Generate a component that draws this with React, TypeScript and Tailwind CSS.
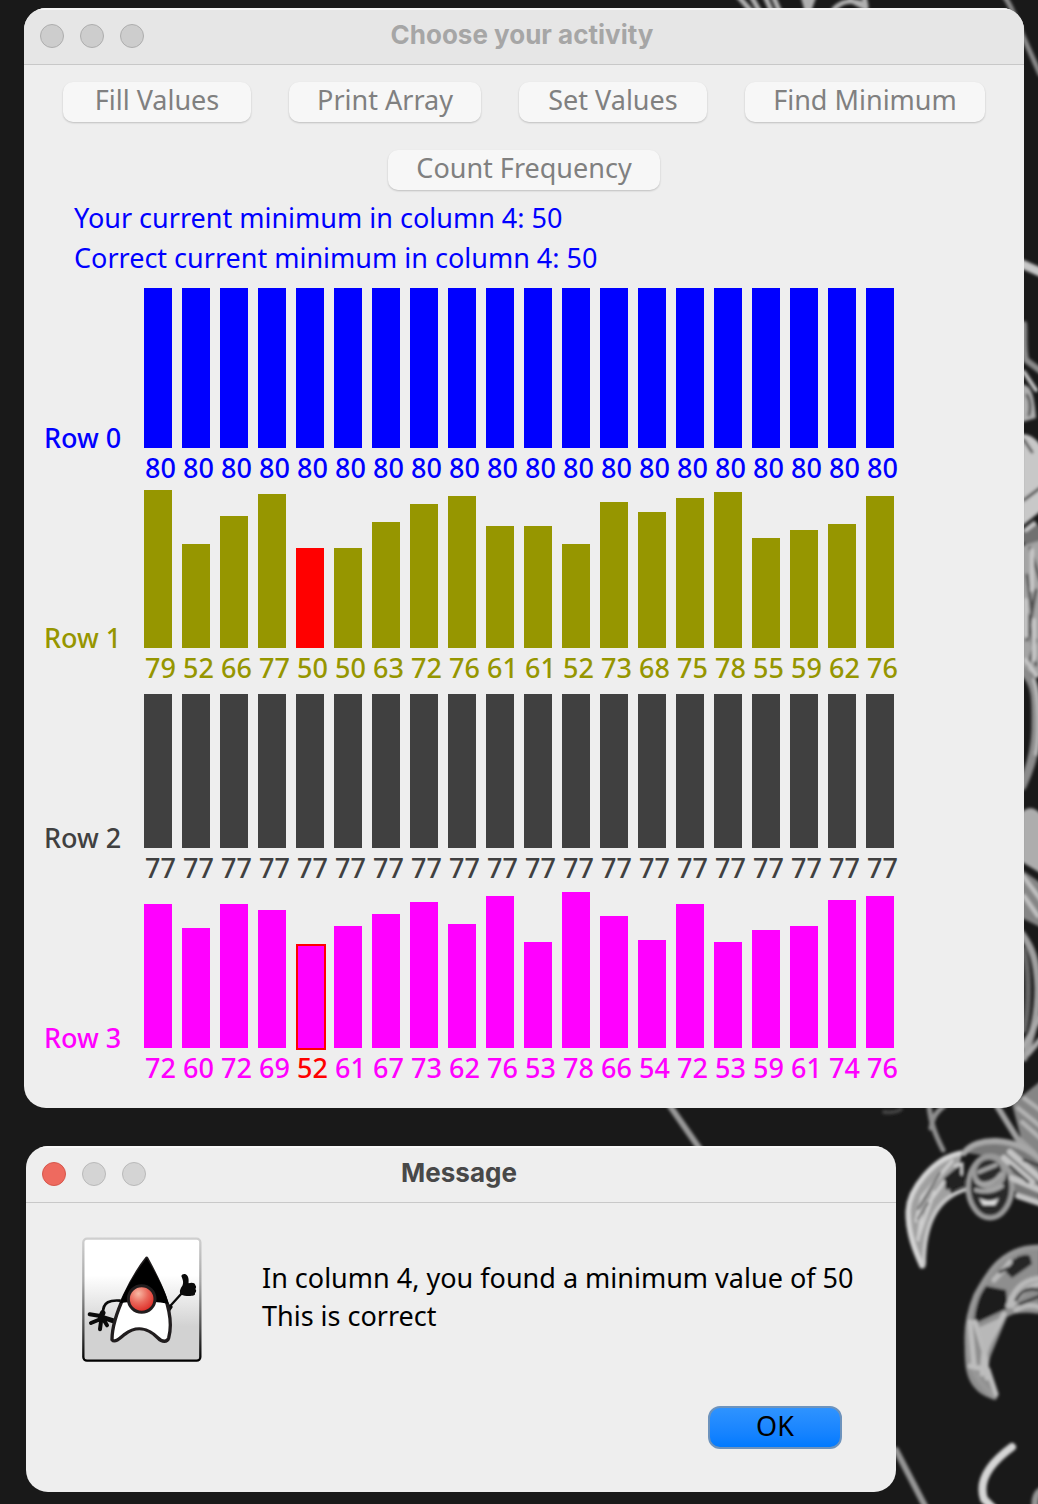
import React from "react";

type BarRow = {
  label: string;
  text: string;
  fill: string;
  values: number[];
  filled?: number;
  outlined?: number;
};

const rows: BarRow[] = [
  { label: "Row 0", text: "text-[#0000ff]", fill: "bg-[#0000ff]", values: Array(20).fill(80) },
  {
    label: "Row 1",
    text: "text-[#969600]",
    fill: "bg-[#969600]",
    values: [79, 52, 66, 77, 50, 50, 63, 72, 76, 61, 61, 52, 73, 68, 75, 78, 55, 59, 62, 76],
    filled: 4,
  },
  { label: "Row 2", text: "text-[#404040]", fill: "bg-[#404040]", values: Array(20).fill(77) },
  {
    label: "Row 3",
    text: "text-[#ff00ff]",
    fill: "bg-[#ff00ff]",
    values: [72, 60, 72, 69, 52, 61, 67, 73, 62, 76, 53, 78, 66, 54, 72, 53, 59, 61, 74, 76],
    outlined: 4,
  },
];

const actions = [
  { name: "Fill Values", width: "w-[188px]" },
  { name: "Print Array", width: "w-[192px]" },
  { name: "Set Values", width: "w-[188px]" },
  { name: "Find Minimum", width: "w-[240px]" },
  { name: "Count Frequency", width: "w-[272px]" },
];

function Wallpaper() {
  return (
    <svg
      className="absolute inset-0 h-full w-full"
      viewBox="0 0 1038 1504"
      preserveAspectRatio="xMaxYMin slice"
      fill="none"
      strokeLinecap="round"
      aria-hidden="true"
    >
      <defs>
        <filter id="soft" x="-5%" y="-5%" width="110%" height="110%">
          <feGaussianBlur stdDeviation="1.5" />
        </filter>
      </defs>
      <g filter="url(#soft)">
        {/* strokes above the first window */}
        <g stroke="#b0b0b0" strokeWidth="5">
          <path d="M738-4l14 16M751-4l9 16M764-6l8 18M773-4l6 14" />
          <path d="M808-4v14M803-4l4 14M814-4l-5 14" />
          <path d="M834 9c8-8 17-10 30-5M850 0l16 8M864-4l2 10" />
          <path d="M1004-4c8 10 12 24 18 38l18 40" stroke="#8a8a8a" />
        </g>
        {/* right edge */}
        <path d="M1022 264l20 9" stroke="#c8c8c8" strokeWidth="9" />
        <path d="M1024 324c1 12-1 22 2 36l16 12" stroke="#8c8c8c" strokeWidth="6" />
        <path d="M1022 384c10 2 12 12 14 34l-14 4z" fill="#b0b0b0" />
        <path d="M1022 434c8 0 16 6 20 14v62l-20 16z" fill="#c8c8c8" />
        <path d="M1022 530l12-10 8 10v26l-20-14z" fill="#707070" />
        <path d="M1022 546l20-6v138l-20-10z" fill="#a4a4a4" />
        <g stroke="#505050" strokeWidth="3">
          <path d="M1027 395q5 8 2 20M1024 440l8 12M1024 500l16-12M1030 548l10 32M1027 575l5 38M1036 590l-9 50M1028 615l8 50M1036 640l-8 26" />
        </g>
        <g stroke="#c9c9c9" strokeWidth="4">
          <path d="M1024 372l12 18M1026 530l8-6M1032 550v40M1026 600v36M1034 620v40M1026 660l10 16" />
        </g>
        <path d="M1024 672c14 12 12 32 12 58-1 24-6 38-14 56" stroke="#8b8b8b" strokeWidth="9" />
        <path d="M1034 680c6 20 5 60 2 74" stroke="#bbb" strokeWidth="4" />
        <path d="M1022 812c6-6 14-5 20 4v58l-20-12z" fill="#adadad" />
        <path d="M1022 870l20 14v44l-20-10z" fill="#858585" />
        <path d="M1023 876l18 24M1024 896l14 20" stroke="#c4c4c4" strokeWidth="4" />
        <path d="M1022 934c10 14 15 26 16 54 0 28-5 44-14 70" stroke="#a0a0a0" strokeWidth="7" />
        <path d="M1023 950c6 14 7 55 1 80" stroke="#666" strokeWidth="6" />
        <path d="M1040 1018l-17 28M1040 1040l-12 14" stroke="#aaa" strokeWidth="5" />
        <path d="M1012 1104l30-24v76l-20-14z" fill="#858585" />
        <g stroke="#b6b6b6" strokeWidth="4">
          <path d="M1018 1108l22 18M1024 1098l16 12M1022 1122l18 16" />
        </g>
        {/* gap between the windows */}
        <path d="M670 1106l32 46" stroke="#989898" strokeWidth="6" />
        <path d="M929 1106c2 18 6 28 14 44M944 1106c-10 8-12 14-13 22" stroke="#8e8e8e" strokeWidth="5" />
        <path d="M884 1112c8 1 13 0 17-3" stroke="#444" strokeWidth="4" />
        <path d="M997 1106l20 32 24 22" stroke="#a0a0a0" strokeWidth="6" />
        {/* upper claw */}
        <path
          d="M962 1153c-16-2-34 12-44 30-12 18-14 28-11 46 2 14 8 28 13 39h5c2-8-1-20 1-34 4-19 18-32 26-39l-4-12 10-10 4-20z"
          fill="#a0a0a0"
        />
        <path d="M944 1178l18-15 2 23-18 4z" fill="#202020" />
        <path d="M961 1153c-28 5-52 36-53 58 0 24 8 42 14 55" stroke="#d6d6d6" strokeWidth="5" />
        <path d="M924 1264c0-36 10-66 43-75" stroke="#c8c8c8" strokeWidth="4" />
        <path d="M952 1161l-30 36-6 24M944 1182l-22 30-4 28M934 1192l-16 46M955 1166l7-2v10" stroke="#cfcfcf" strokeWidth="3" />
        <path d="M940 1173l-22 36M928 1203l-10 16" stroke="#5a5a5a" strokeWidth="2" />
        {/* knuckle */}
        <path d="M962 1152c14-14 40-20 78 2v48c-16 0-24-6-30-18-5-16-12-26-24-28z" fill="#787878" />
        <path d="M964 1153c12-17 50-17 76 6" stroke="#a8a8a8" strokeWidth="6" />
        <ellipse cx="990" cy="1187" rx="22" ry="31" fill="#2c2c2c" stroke="#9b9b9b" strokeWidth="5" />
        <ellipse cx="989" cy="1172" rx="15" ry="15" stroke="#999" strokeWidth="5" />
        <path d="M977 1182q14 6 24-8M979 1172l17-7M976 1190q14 4 26-4" stroke="#a6a6a6" strokeWidth="4" />
        <path d="M979 1198q10 6 20 0l-4 7-12 0z" fill="#e0e0e0" />
        <path d="M1004 1158l28 24M1010 1152l30 26M1012 1178l28 12M1018 1196l24 8" stroke="#c4c4c4" strokeWidth="6" />
        <path d="M1010 1166l18 16M1024 1160l16 6" stroke="#404040" strokeWidth="3" />
        {/* lower claw */}
        <path
          d="M1040 1247c-38 2-54 26-66 50-9 22-11 52-8 72 4 20 16 27 29 31 4-2 3-7 0-11-7-8-8-22-4-34l16-38c8-5 18-5 33-3z"
          fill="#8e8e8e"
        />
        <path d="M986 1286l20 4 2 18-34 16c1-14 4-28 12-38z" fill="#1c1c1c" />
        <path d="M1010 1262q14-10 20-6l2 8-20 14-6-6z" fill="#262626" />
        <path d="M1040 1247c-38 0-52 26-64 48-14 34-14 76 18 101" stroke="#989898" strokeWidth="5" />
        <path d="M975 1322l10 32 2 24M1004 1314l-20 38-2 22M970 1322l4 42M970 1366l18 4 8 24" stroke="#bdbdbd" strokeWidth="5" />
        <path d="M978 1328l22-10-14 40z" fill="#b8b8b8" />
        <path d="M1008 1306c8-22 20-27 34-28M1012 1306c6-12 16-20 28-22M1016 1310q12-8 26-2M994 1280q8-8 16-18" stroke="#bababa" strokeWidth="5" />
        <path d="M1016 1300q7-14 22-10M1020 1304l20-8M1000 1272l8-4" stroke="#3a3a3a" strokeWidth="3" />
        {/* lower strokes */}
        <path d="M1012 1447c-22 16-34 34-28 52l10 10" stroke="#d6d6d6" strokeWidth="8" />
        <path d="M896 1450l30 58" stroke="#969696" strokeWidth="6" />
        <path d="M1042 1490q-8 4-7 18" stroke="#969696" strokeWidth="7" />
      </g>
    </svg>
  );
}

function Lights({ closable = false }: { closable?: boolean }) {
  return (
    <div className="flex gap-4">
      <button
        aria-label="Close"
        className={
          closable
            ? "h-6 w-6 rounded-full border border-[#d5574c] bg-[#ee6a5f]"
            : "h-6 w-6 rounded-full border border-[#adadad] bg-[#cdcdcd]"
        }
      />
      {["Minimize", "Zoom"].map((name) => (
        <button
          key={name}
          aria-label={name}
          className={
            closable
              ? "h-6 w-6 rounded-full border border-[#b9b9b9] bg-[#d4d4d4]"
              : "h-6 w-6 rounded-full border border-[#adadad] bg-[#cdcdcd]"
          }
        />
      ))}
    </div>
  );
}

function Duke() {
  return (
    <svg className="h-[125px] w-[120px] shrink-0" viewBox="36 36 360 375" role="img" aria-label="Duke">
      <defs>
        <linearGradient id="panel" x1="0" y1="0" x2="0" y2="1">
          <stop offset="0.3" stopColor="#fff" />
          <stop offset="0.72" stopColor="#d2d2d2" />
          <stop offset="1" stopColor="#d2d2d2" />
        </linearGradient>
        <linearGradient id="edge" x1="0" y1="0" x2="0" y2="1">
          <stop offset="0" stopColor="#cfcfcf" />
          <stop offset="0.35" stopColor="#a8a8a8" />
          <stop offset="0.75" stopColor="#484848" />
          <stop offset="1" stopColor="#000" />
        </linearGradient>
        <radialGradient id="nose" cx="0.38" cy="0.3" r="0.7">
          <stop offset="0" stopColor="#f8b9a4" />
          <stop offset="0.5" stopColor="#ea685b" />
          <stop offset="1" stopColor="#dd2b26" />
        </radialGradient>
      </defs>
      <rect x="40" y="41" width="351" height="366" rx="11" fill="url(#panel)" stroke="url(#edge)" strokeWidth="7" />
      <g fill="none" stroke="#0a0a0a" strokeLinecap="round" strokeLinejoin="round">
        <path d="M150 227c-28-2-52 2-51 38" strokeWidth="8" />
        <path d="M300 244l38-42" strokeWidth="7" />
        <path d="M290 238l14 8-10 14z" strokeWidth="8" fill="#0a0a0a" />
        <path d="M128 287l-24-8" strokeWidth="15" />
        <path d="M96 274l-37-6M92 282l-29 12M94 282l-4 31" strokeWidth="12" />
        <path d="M98 264l-6 14 10 6" strokeWidth="17" />
        <path d="M102 286l9 15" strokeWidth="12" />
      </g>
      <path
        d="M334 153c2-8 14-8 18-1 6 9 3 18 4 23 8-3 20-2 20 6 3 3 3 8 0 11 4 4 3 9-1 12 2 7-5 9-11 8-7 3-14 0-20 0-8-1-12-3-14-8-2-8 3-16 7-22 5-10 1-19-3-29z"
        fill="#0a0a0a"
      />
      <path
        d="M230 100C190 150 126 268 126 344c8 10 22-2 38-16 34-26 70-20 100 11 12 13 28 13 32 0 22-80-34-180-66-239z"
        fill="#fff"
        stroke="#211d1e"
        strokeWidth="10"
        strokeLinejoin="round"
      />
      <path d="M230 100c-30 38-64 92-81 135 38-8 112-8 148 2-15-52-44-97-67-137z" fill="#000" />
      <circle cx="215" cy="222" r="40" fill="url(#nose)" stroke="#211d1e" strokeWidth="9" />
    </svg>
  );
}

function Chart({ row }: { row: BarRow }) {
  return (
    <div className={"flex h-[200px] font-medium " + row.text}>
      <div className="flex h-[160px] w-[100px] shrink-0 items-end">
        <span className="leading-5">{row.label}</span>
      </div>
      {row.values.map((value, i) => (
        <div key={i} className="w-[38px] shrink-0">
          <div className="flex h-[160px] items-end">
            <div
              className={"relative w-7 " + (row.filled === i ? "bg-[#ff0000]" : row.fill)}
              style={{ height: value * 2 }}
            >
              {row.outlined === i && (
                <div className="absolute top-0 left-0 -right-0.5 -bottom-0.5 border-2 border-[#ff0000]" />
              )}
            </div>
          </div>
          <div className={row.outlined === i ? "pl-px leading-10 text-[#ff0000]" : "pl-px leading-10"}>{value}</div>
        </div>
      ))}
    </div>
  );
}

export default function App() {
  return (
    <div className="relative min-h-screen overflow-hidden bg-[#191919] pt-2 pr-3.5 pb-3 pl-6 font-['Noto_Sans',sans-serif] text-[27px]">
      <Wallpaper />
      <main className="relative overflow-hidden rounded-[22px] bg-[#eeeeee] pb-5">
        <header className="grid h-[57px] grid-cols-[1fr_auto_1fr] items-center border-b border-[#c8c8c8] bg-[#e6e6e6] px-4 shadow-[inset_0_2px_0_#f4f4f4]">
          <Lights />
          <h1 className="pr-1 pb-0.5 font-['Inter',sans-serif] text-[26px] leading-8 font-bold text-[#a6a6a6]">
            Choose your activity
          </h1>
        </header>
        <div className="flex flex-wrap justify-center gap-x-[38px] gap-y-7 pt-[17px]">
          {actions.map((a) => (
            <button
              key={a.name}
              disabled
              className={
                "h-10 rounded-[10px] bg-[#f7f7f7] pb-1 leading-9 text-[#808080] shadow-[0_1px_2px_rgba(0,0,0,0.2)] " +
                a.width
              }
            >
              {a.name}
            </button>
          ))}
        </div>
        <div className="pt-2 pb-2.5 pl-[50px] leading-10 text-[#0000ff]">
          <p>Your current minimum in column 4: 50</p>
          <p>Correct current minimum in column 4: 50</p>
        </div>
        <section className="pl-5">
          {rows.map((row) => (
            <Chart key={row.label} row={row} />
          ))}
        </section>
      </main>

      <section
        role="dialog"
        aria-labelledby="message-title"
        className="relative mt-[38px] ml-0.5 max-w-[870px] overflow-hidden rounded-[22px] bg-[#eeeeee] pb-[43px]"
      >
        <header className="grid h-[57px] grid-cols-[1fr_auto_1fr] items-center border-b border-[#c8c8c8] px-4 shadow-[inset_0_2px_0_#f8f8f8]">
          <Lights closable />
          <h2
            id="message-title"
            className="pr-1 pb-0.5 font-['Inter',sans-serif] text-[26px] leading-8 font-bold text-[#484848]"
          >
            Message
          </h2>
        </header>
        <div className="flex items-center gap-[60px] pt-[34px] pl-14">
          <Duke />
          <div className="pb-1.5 leading-[38px] text-black">
            <p>In column 4, you found a minimum value of 50</p>
            <p>This is correct</p>
          </div>
        </div>
        <div className="flex justify-end pt-[44px] pr-[54px]">
          <button className="h-[43px] w-[134px] rounded-xl border-2 border-[#6d93bd] bg-linear-to-b from-[#2e93ff] to-[#007aff] pb-1 leading-8 text-black">
            OK
          </button>
        </div>
      </section>
    </div>
  );
}
